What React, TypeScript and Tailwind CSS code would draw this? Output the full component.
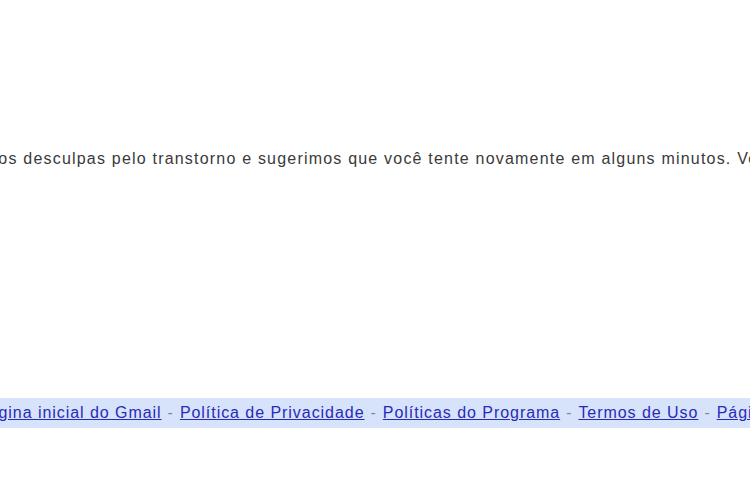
export default function App() {
  return (
    <div className="h-[500px] w-[750px] overflow-hidden bg-white font-['Liberation_Sans',Arial,sans-serif]">
      <div className="flex h-full flex-col">
        <div className="h-[150px]" />
        <p className="ml-[-53px] whitespace-nowrap text-[16px] leading-[18px] tracking-[1.2px] text-[#3a3a3a]">
          Pedimos desculpas pelo transtorno e sugerimos que você tente novamente em alguns minutos. Você ainda pode acessar o Gmail.
        </p>
        <div className="h-[230px]" />
        <div className="flex h-[30px] items-center whitespace-nowrap bg-[#d6e3fa] text-[16px] tracking-[0.95px] text-[#888]">
          <div className="ml-[-23px] flex items-center gap-[6px]">
            <a className="text-[#2a2ab8] underline">Página inicial do Gmail</a>
            <span>-</span>
            <a className="text-[#2a2ab8] underline">Política de Privacidade</a>
            <span>-</span>
            <a className="text-[#2a2ab8] underline">Políticas do Programa</a>
            <span>-</span>
            <a className="text-[#2a2ab8] underline">Termos de Uso</a>
            <span>-</span>
            <a className="text-[#2a2ab8] underline">Página inicial do Google</a>
          </div>
        </div>
      </div>
    </div>
  );
}
